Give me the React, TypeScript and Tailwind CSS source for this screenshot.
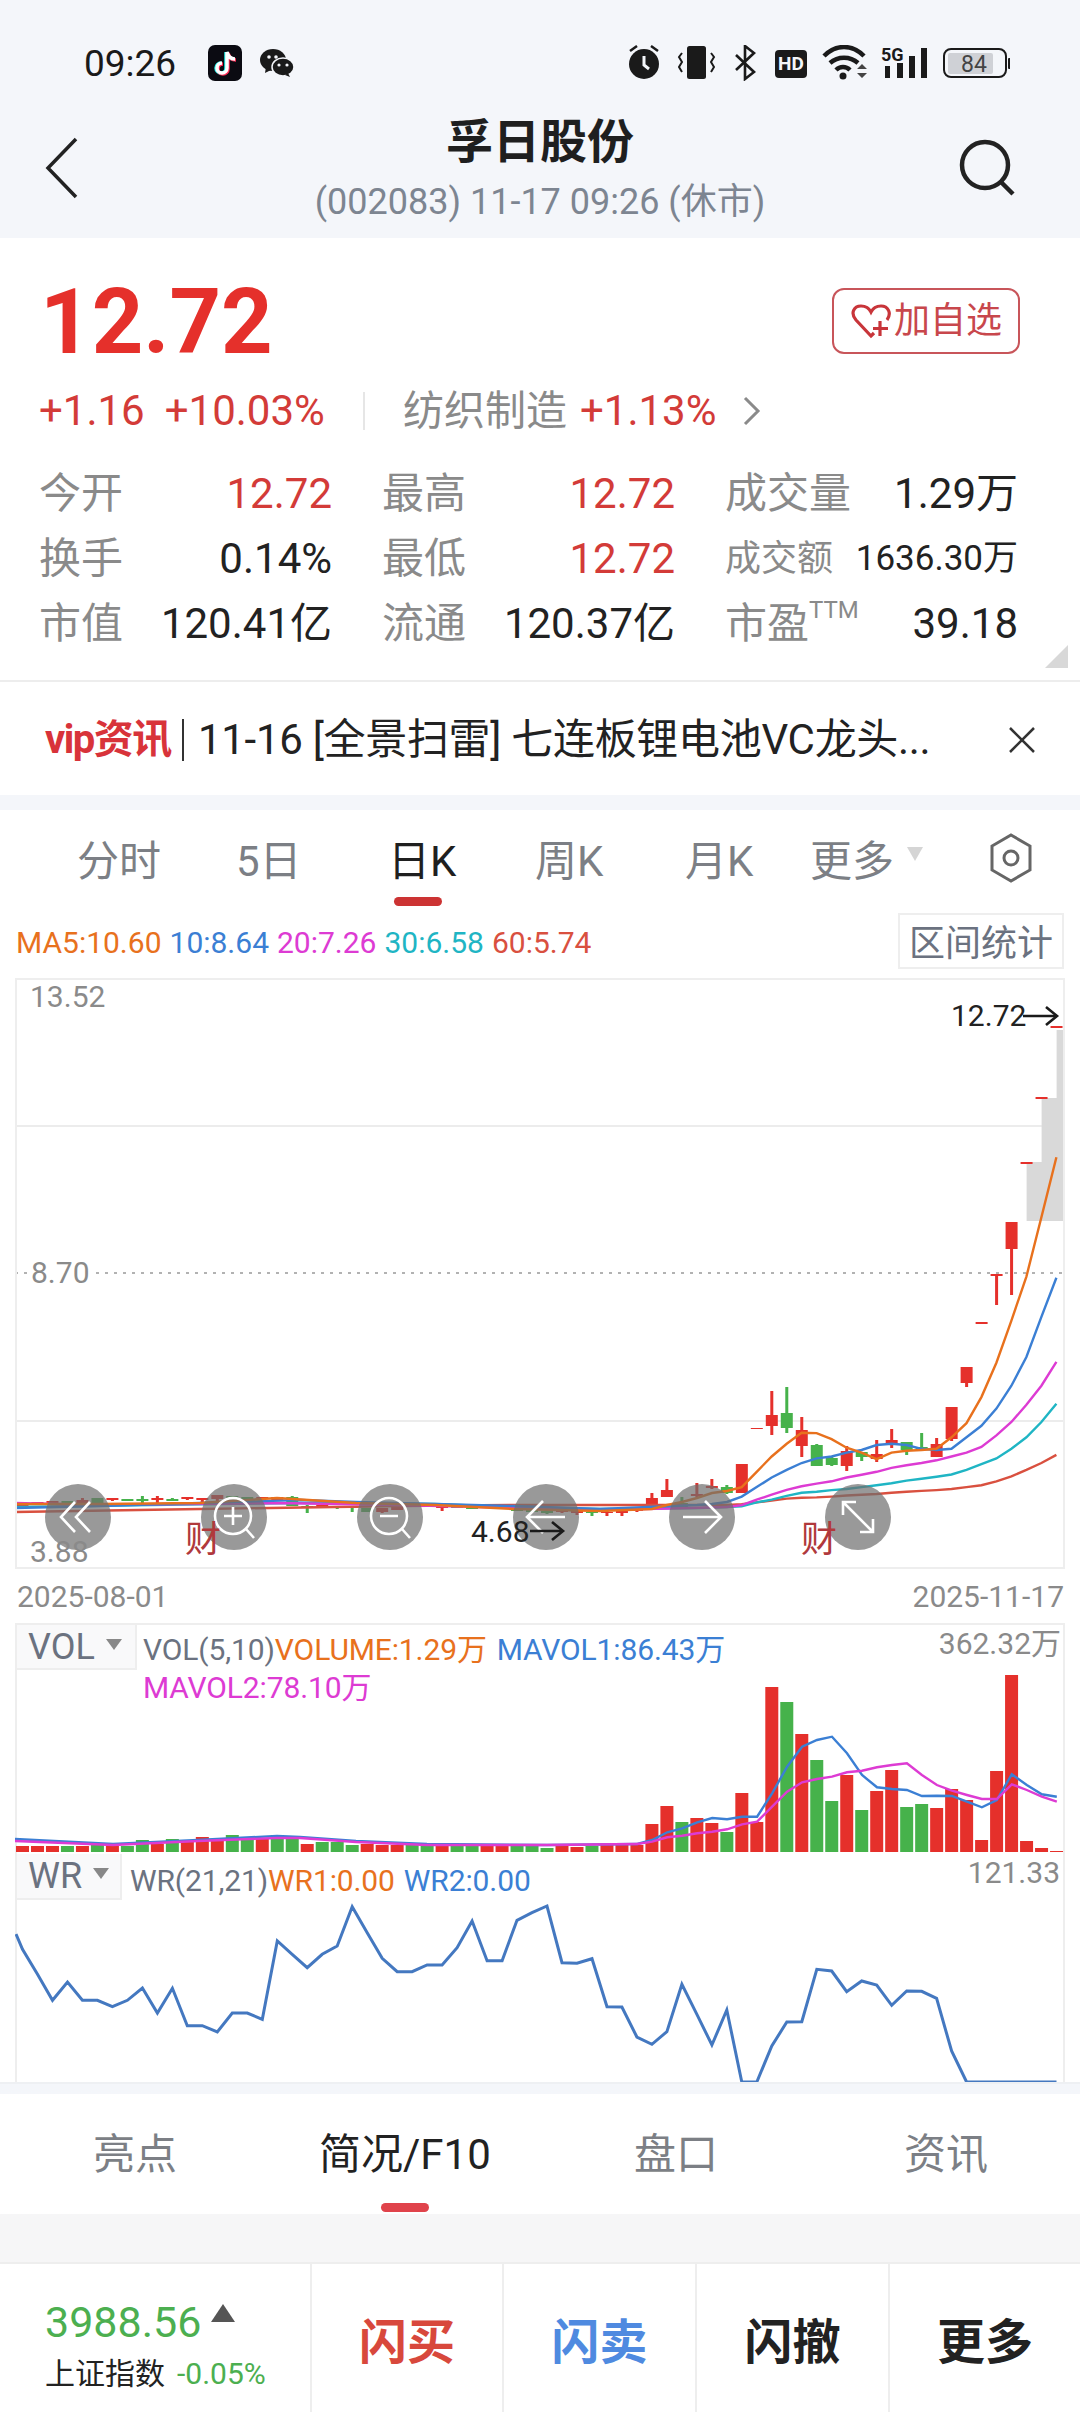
const RED = '#e5302b';
const GREEN = '#46b24b';

// converts coordinates read off the right half of the chart into page coordinates
const k = (h: number, v: number): [number, number] => [540 + h / 2.91, 980 + v / 2.613];
const xi = (i: number) => 22.5 + i * 14.986;
const line = (p: number[][]) => p.map((q) => `${q[0].toFixed(1)},${q[1].toFixed(1)}`).join(' ');

const rightLine = (vs: number[]) => vs.map((v, idx) => k(587 + idx * 43.6, v));

const ma5: number[][] = [[15, 1504], [100, 1504], [200, 1503], [277, 1498], [356, 1503], [435, 1505], [514, 1509], [600, 1511], [652, 1509], [667, 1505], [682, 1502], [697, 1498], [712, 1493], [727, 1491],
  ...rightLine([1325, 1285, 1245, 1212, 1183, 1184, 1200, 1222, 1235, 1252, 1235, 1230, 1228, 1225, 1195, 1158, 1090, 1000, 890, 775, 620, 463])];
const ma10: number[][] = [[15, 1508], [100, 1506], [200, 1503], [300, 1500], [356, 1502], [435, 1504], [514, 1506], [600, 1509], [697, 1505], [712, 1504], [727, 1502],
  ...rightLine([1350, 1325, 1300, 1280, 1262, 1250, 1245, 1235, 1228, 1215, 1212, 1215, 1225, 1228, 1225, 1195, 1165, 1120, 1060, 985, 880, 778])];
const ma20: number[][] = [[15, 1503], [100, 1505], [277, 1503], [400, 1505], [514, 1508], [600, 1510], [690, 1508], [727, 1507],
  ...rightLine([1372, 1358, 1345, 1332, 1323, 1316, 1310, 1300, 1293, 1285, 1275, 1268, 1262, 1255, 1245, 1235, 1220, 1190, 1155, 1110, 1060, 998])];
const ma30: number[][] = [[15, 1507], [150, 1505], [300, 1503], [435, 1504], [514, 1507], [600, 1509], [700, 1508], [727, 1507],
  ...rightLine([1375, 1365, 1358, 1348, 1340, 1337, 1333, 1330, 1325, 1320, 1315, 1308, 1303, 1298, 1292, 1280, 1265, 1250, 1225, 1195, 1155, 1107])];
const ma60: number[][] = [[15, 1512], [200, 1509], [400, 1506], [514, 1505], [640, 1505], [727, 1505],
  ...rightLine([1370, 1365, 1360, 1355, 1353, 1352, 1350, 1347, 1345, 1343, 1340, 1337, 1335, 1333, 1330, 1325, 1320, 1310, 1297, 1280, 1262, 1241])];

// top, bottom, high, low, colour
type Candle = [number, number, number, number, string];
const R = RED;
const G = GREEN;
const candles: Candle[] = [
  [1504, 1508, 1504, 1508, R], [1502, 1504, 1502, 1504, R], [1501, 1503, 1501, 1505, R], [1501, 1504, 1501, 1504, G], [1500, 1503, 1498, 1505, R],
  [1498, 1503, 1498, 1503, G], [1498, 1500, 1498, 1501, R], [1499, 1501, 1499, 1501, G], [1499, 1501, 1496, 1503, G], [1498, 1500, 1496, 1503, R],
  [1499, 1501, 1498, 1501, G], [1497, 1499, 1497, 1500, R], [1498, 1500, 1498, 1505, R], [1495, 1499, 1495, 1503, R], [1496, 1499, 1496, 1499, G],
  [1497, 1500, 1497, 1501, G], [1497, 1499, 1497, 1499, R], [1497, 1500, 1497, 1500, R], [1497, 1506, 1496, 1506, G], [1506, 1507, 1505, 1513, G],
  [1505, 1506, 1505, 1506, R], [1506, 1507, 1506, 1509, G], [1506, 1508, 1506, 1512, G], [1508, 1512, 1508, 1512, G], [1508, 1512, 1508, 1513, R],
  [1506, 1510, 1506, 1510, R], [1505, 1507, 1505, 1507, G], [1505, 1506, 1505, 1506, G], [1505, 1508, 1505, 1511, R], [1506, 1508, 1506, 1508, G],
  [1505, 1509, 1505, 1509, G], [1505, 1507, 1505, 1507, R], [1506, 1507, 1506, 1507, R], [1508, 1511, 1508, 1511, G], [1509, 1512, 1509, 1512, G],
  [1511, 1513, 1511, 1514, G], [1509, 1512, 1509, 1513, R], [1511, 1513, 1511, 1515, R], [1512, 1513, 1512, 1516, G], [1512, 1513, 1511, 1516, R],
  [1511, 1513, 1510, 1516, R], [1509, 1511, 1507, 1512, R], [1498, 1507, 1493, 1507, R], [1490, 1497, 1479, 1497, R], [1503, 1507, 1497, 1507, G],
  [1494, 1496, 1483, 1497, R], [1486, 1488, 1479, 1489, R], [1487, 1493, 1485, 1494, G], [1464, 1493, 1464, 1493, R], [1428, 1429, 1428, 1429, R],
  [1415, 1426, 1391, 1435, R], [1413, 1428, 1387, 1433, G], [1430, 1446, 1417, 1457, R], [1445, 1466, 1444, 1466, G], [1458, 1465, 1456, 1466, G],
  [1451, 1466, 1446, 1471, R], [1452, 1457, 1452, 1461, G], [1454, 1459, 1440, 1462, R], [1440, 1445, 1429, 1448, R], [1442, 1450, 1442, 1455, G],
  [1447, 1449, 1433, 1449, G], [1444, 1457, 1438, 1457, R], [1407, 1439, 1407, 1441, R], [1367, 1383, 1367, 1387, R], [1322, 1324, 1322, 1324, R],
  [1274, 1276, 1274, 1305, R], [1222, 1249, 1222, 1295, R], [1162, 1164, 1162, 1164, R], [1097, 1099, 1097, 1099, R], [1026, 1028, 1026, 1028, R],
];

// height above the baseline, colour
const volumes: [number, string][] = [
  [6, R], [6, R], [6, R], [6, G], [6, R], [7, G], [6, R], [6, G], [12, G], [8, R], [13, G], [11, R], [15, R], [11, R], [17, G], [12, G], [13, R], [17, G], [13, G], [8, R],
  [10, G], [10, G], [7, G], [8, R], [7, R], [7, R], [7, G], [6, G], [6, R], [6, G], [6, G], [6, R], [6, R], [6, G], [6, G], [4, G], [8, R], [5, R], [6, G], [7, R],
  [7, R], [7, R], [28, R], [46, R], [30, G], [34, R], [29, R], [20, G], [59, R], [30, R], [165, R], [150, G], [118, R], [92, G], [51, G], [77, R], [42, G], [61, R], [82, R], [45, G],
  [48, G], [44, R], [63, R], [52, R], [12, R], [81, R], [177, R], [11, R], [4, R], [1, R],
];

const vy = (v: number) => 1580 + v / 3;
const volRight = (vs: number[]) => vs.map((v, idx) => [540 + (283 + idx * 43.6) / 2.91, vy(v)]);
const mavol1: number[][] = [[15, 1839], [113, 1844], [198, 1840], [277, 1836], [300, 1837], [356, 1841], [427, 1844], [547, 1845], [637, 1844],
  ...volRight([792, 780, 757, 745, 727, 714, 718, 710, 710, 640, 560, 500, 480, 470, 520, 585, 622, 627, 630, 648, 647, 648, 665, 682, 660, 583, 615, 643, 650])];
const mavol2: number[][] = [[15, 1841], [113, 1845], [198, 1841], [277, 1838], [300, 1838], [356, 1842], [427, 1845], [547, 1845], [637, 1844],
  ...volRight([792, 785, 772, 767, 760, 755, 748, 733, 725, 680, 635, 607, 597, 590, 577, 572, 562, 555, 550, 585, 615, 632, 645, 657, 657, 613, 630, 650, 665])];

const wrLeft = [265, 340, 418, 363, 418, 418, 437, 418, 381, 456, 382, 494, 494, 513, 456, 456, 475, 240, 280, 320, 280, 255, 137, 215, 292, 332, 332, 312, 312, 260, 180, 299, 299, 178, 155, 135];
const wrRight = [1145, 1147, 1133, 1277, 1278, 1368, 1390, 1352, 1210, 1300, 1392, 1287, 1503, 1503, 1395, 1323, 1322, 1165, 1170, 1232, 1200, 1212, 1273, 1230, 1231, 1252, 1410, 1503, 1503, 1503, 1503, 1503, 1503, 1503];
const wrLine: number[][] = [[16, 1933], ...wrLeft.map((v, i) => [xi(i), 1860 + v / 3]), ...wrRight.map((v, i) => [xi(i + 36), 1580 + v / 3])];

const StatusIcons = () => (
  <svg width="382" height="36" viewBox="628 44 382 36" className="ml-auto">
    {/* alarm */}
    <circle cx="644" cy="63" r="15" fill="#1a1a1a" />
    <path d="M630 50l7-5M658 50l-7-5" stroke="#1a1a1a" strokeWidth="2.5" />
    <path d="M644 55v9l5 4" stroke="#f4f6fa" strokeWidth="3" fill="none" />
    {/* vibrate */}
    <rect x="687" y="45" width="19" height="33" rx="2.5" fill="#1a1a1a" />
    <path d="M682 52l-3 4 3 5-3 5 3 5M711 52l3 4-3 5 3 5-3 5" stroke="#1a1a1a" strokeWidth="2" fill="none" />
    {/* bluetooth */}
    <path d="M736 54l18 17-9 7V45l9 7-18 17" stroke="#1a1a1a" strokeWidth="2.6" fill="none" />
    {/* HD */}
    <rect x="775" y="49" width="32" height="28" rx="4" fill="#1a1a1a" />
    <text x="791" y="69" textAnchor="middle" fontSize="19" fontWeight="700" fill="#f4f6fa" fontFamily="Roboto">HD</text>
    {/* wifi */}
    <path d="M824 55c12-12 28-12 40 0M830 62c8-7 20-7 28 0M836 69c4-4 10-4 14 0" stroke="#1a1a1a" strokeWidth="4.5" fill="none" />
    <circle cx="843" cy="75" r="3.5" fill="#1a1a1a" />
    <path d="M857 68l5-5 5 5zM857 72h10l-5 5z" fill="#444" />
    {/* 5G and signal */}
    <text x="881" y="60" fontSize="18" fontWeight="700" fill="#1a1a1a" fontFamily="Roboto">5G</text>
    <rect x="885" y="65" width="5" height="12" fill="#1a1a1a" />
    <rect x="897" y="62" width="6" height="15" fill="#1a1a1a" />
    <rect x="909" y="55" width="6" height="22" fill="#1a1a1a" />
    <rect x="921" y="47" width="6" height="30" fill="#1a1a1a" />
    {/* battery */}
    <rect x="944" y="48" width="62" height="28" rx="7" fill="none" stroke="#1a1a1a" strokeWidth="2" />
    <rect x="948" y="52" width="45" height="21" rx="2" fill="#cfd1d6" />
    <rect x="1008" y="57" width="2.5" height="11" rx="1" fill="#1a1a1a" />
    <text x="974" y="71" textAnchor="middle" fontSize="23" fill="#444" fontFamily="Roboto">84</text>
  </svg>
);

const Stat = ({ label, value, red, small, ttm }: { label: string; value: string; red?: boolean; small?: boolean; ttm?: boolean }) => (
  <div className="flex items-center justify-between h-[65px]">
    <span className={`text-[#8a8a8a] leading-none ${small ? 'text-[36px]' : 'text-[42px]'}`}>
      {label}
      {ttm && <sup className="text-[24px] align-[8px] leading-none">TTM</sup>}
    </span>
    <span className={`leading-none ${small ? 'text-[35px]' : 'text-[42px]'} ${red ? 'text-[#d33b38]' : 'text-[#222]'}`}>{value}</span>
  </div>
);

const RoundButton = ({ children }: { children: React.ReactNode }) => (
  <div className="w-[66px] h-[66px] rounded-full bg-[#6e6e6e]/70 flex items-center justify-center">
    <svg width="66" height="66" viewBox="0 0 66 66" fill="none" stroke="#fff" strokeWidth="2.6">
      {children}
    </svg>
  </div>
);

const Arrow = ({ x, y, w }: { x: number; y: number; w: number }) => (
  <g stroke="#1a1a1a" strokeWidth="2.6" fill="none">
    <path d={`M${x} ${y}h${w}`} />
    <path d={`M${x + w - 11} ${y - 9}l11 9-11 9`} />
  </g>
);

export default function App() {
  return (
    <div className="w-[1080px] h-[2412px] bg-white overflow-hidden font-[Roboto,'Noto_Sans_CJK_SC',sans-serif]">
      {/* status bar + title */}
      <div className="h-[238px] bg-[#f4f6fa] relative">
        <div className="h-[126px] flex items-center pl-[84px] pr-[70px]">
          <span className="text-[37px] leading-none text-[#1a1a1a] w-[124px]">09:26</span>
          <svg width="34" height="36" viewBox="0 0 34 36">
            <rect width="34" height="36" rx="7" fill="#0b0b12" />
            <path d="M19 7v16a5 5 0 1 1-5-5M19 7c1 4 4 7 8 7" fill="none" stroke="#25f4ee" strokeWidth="3.5" transform="translate(-1 0)" />
            <path d="M19 7v16a5 5 0 1 1-5-5M19 7c1 4 4 7 8 7" fill="none" stroke="#fe2c55" strokeWidth="3.5" transform="translate(1 1)" />
            <path d="M19 7v16a5 5 0 1 1-5-5M19 7c1 4 4 7 8 7" fill="none" stroke="#fff" strokeWidth="3.5" />
          </svg>
          <svg width="34" height="28" viewBox="0 0 34 28" className="ml-[18px]">
            <ellipse cx="13" cy="11" rx="13" ry="11" fill="#1a1a1a" />
            <path d="M6 18l-1 6 6-3z" fill="#1a1a1a" />
            <ellipse cx="23" cy="18" rx="11" ry="9" fill="#1a1a1a" stroke="#f4f6fa" strokeWidth="1.5" />
            <path d="M28 24l2 4-5-2z" fill="#1a1a1a" />
            <circle cx="9" cy="8" r="1.8" fill="#f4f6fa" />
            <circle cx="16" cy="8" r="1.8" fill="#f4f6fa" />
            <circle cx="19" cy="16" r="1.6" fill="#f4f6fa" />
            <circle cx="27" cy="16" r="1.6" fill="#f4f6fa" />
          </svg>
          <StatusIcons />
        </div>
        <div className="flex flex-col items-center">
          <div className="text-[47px] leading-[46px] font-bold text-[#1f1f1f] -mt-[7px]">孚日股份</div>
          <div className="text-[36px] leading-[40px] text-[#7d8591] mt-[17px]">(002083) 11-17 09:26 (休市)</div>
        </div>
        <svg width="40" height="64" viewBox="0 0 40 64" fill="none" stroke="#222" strokeWidth="3.5" className="absolute left-[42px] top-[136px]">
          <path d="M34 3L6 32l28 29" />
        </svg>
        <svg width="60" height="60" viewBox="0 0 60 60" fill="none" stroke="#222" strokeWidth="4.5" className="absolute left-[958px] top-[138px]">
          <circle cx="27" cy="27" r="23" />
          <path d="M43 44l12 12" />
        </svg>
      </div>

      {/* quote */}
      <div className="h-[444px] relative border-b-2 border-[#ededed]">
        <div className="h-[142px] flex items-start justify-between pl-[40px] pr-[60px]">
          <span className="text-[90px] leading-[90px] font-bold mt-[40px] text-[#e5302b]">12.72</span>
          <div className="mt-[50px] w-[188px] h-[66px] rounded-[12px] border-2 border-[#c8555a] flex items-center justify-center gap-[2px] text-[#c8474c] text-[36px] leading-none">
            <svg width="42" height="36" viewBox="0 0 42 36" fill="none" stroke="#c8353a" strokeWidth="3.2">
              <path d="M24 30l-3 3L6 17C0 10 4 3 11 3c4 0 8 2 10 6 2-4 6-6 10-6 7 0 11 7 6 14" />
              <path d="M30 18v15M23 25.500h15" />
            </svg>
            加自选
          </div>
        </div>
        <div className="h-[60px] flex items-center text-[42px] leading-none pl-[39px] pt-[2px]">
          <span className="text-[#d33b38] w-[324px] whitespace-nowrap">
            +1.16<span className="ml-[20px]">+10.03%</span>
          </span>
          <span className="w-[2px] h-[38px] bg-[#e6e6e6]" />
          <span className="text-[#8a8a8a] ml-[38px] text-[41px]">纺织制造</span>
          <span className="text-[#d33b38] ml-[13px]">+1.13%</span>
          <svg width="20" height="32" viewBox="0 0 20 32" fill="none" stroke="#8a8a8a" strokeWidth="3" className="ml-[26px]">
            <path d="M3 3l13 13L3 29" />
          </svg>
        </div>
        <div className="grid grid-cols-[293px_293px_293px] gap-x-[50px] pl-[39px] mt-[21px]">
          <Stat label="今开" value="12.72" red />
          <Stat label="最高" value="12.72" red />
          <Stat label="成交量" value="1.29万" />
          <Stat label="换手" value="0.14%" />
          <Stat label="最低" value="12.72" red />
          <Stat label="成交额" value="1636.30万" small />
          <Stat label="市值" value="120.41亿" />
          <Stat label="流通" value="120.37亿" />
          <Stat label="市盈" value="39.18" ttm />
        </div>
        <div className="absolute left-[1045px] top-[407px] w-0 h-0 border-l-[23px] border-l-transparent border-b-[23px] border-b-[#d8d8d8]" />
      </div>

      {/* news */}
      <div className="h-[113px] flex items-center pl-[45px] pr-[43px] pt-[2px]">
        <span className="text-[40px] leading-none font-bold text-[#d8333a] tracking-[-1.5px] w-[137px] whitespace-nowrap">vip资讯</span>
        <span className="w-[2px] h-[42px] bg-[#333]" />
        <span className="text-[42px] leading-none text-[#222] ml-[14px] whitespace-nowrap flex-1 tracking-[-0.3px]">11-16 [全景扫雷] 七连板锂电池VC龙头...</span>
        <svg width="30" height="30" viewBox="0 0 30 30" stroke="#333" strokeWidth="2.5">
          <path d="M3 3l24 24M27 3L3 27" />
        </svg>
      </div>
      <div className="h-[15px] bg-[#f4f6fa]" />

      {/* period tabs */}
      <div className="h-[102px] relative flex items-center text-[42px] leading-none text-[#7c7f85] pt-[2px]">
        <span className="ml-[77px] w-[159px]">分时</span>
        <span className="w-[152px]">5日</span>
        <span className="w-[147px] text-[#1f1f1f]">日K</span>
        <span className="w-[150px]">周K</span>
        <span className="w-[125px]">月K</span>
        <span>更多</span>
        <span className="ml-[13px] -mt-[16px] w-0 h-0 border-x-[8px] border-x-transparent border-t-[14px] border-t-[#d5d5d5]" />
        <svg width="44" height="50" viewBox="0 0 44 50" fill="none" stroke="#666" strokeWidth="3" className="ml-[66px] -mt-[8px]">
          <path d="M22 2l19 11v24L22 48 3 37V13z" />
          <circle cx="22" cy="25" r="7" />
        </svg>
        <div className="absolute left-[394px] top-[87px] w-[48px] h-[9px] rounded-full bg-[#cc3333]" />
      </div>

      {/* MA legend */}
      <div className="h-[66px] flex items-start pl-[16px] pr-[16px]">
        <div className="flex gap-[8px] text-[30px] leading-none mt-[16px]">
          <span className="text-[#e8711d]">MA5:10.60</span>
          <span className="text-[#3b7fd4]">10:8.64</span>
          <span className="text-[#dd3bd3]">20:7.26</span>
          <span className="text-[#1fb5c4]">30:6.58</span>
          <span className="text-[#d9503f]">60:5.74</span>
        </div>
        <div className="ml-auto mt-[1px] w-[166px] h-[56px] border-2 border-[#eeeeee] flex items-center justify-center pt-[6px] text-[36px] leading-none text-[#6b7280]">区间统计</div>
      </div>

      {/* k-line chart */}
      <div className="relative ml-[15px] w-[1050px] h-[591px]">
        <svg width="1050" height="591" viewBox="15 978 1050 591" className="absolute inset-0">
          <path d="M15 1126h1049M15 1421h1049" stroke="#ececec" strokeWidth="2" />
          <path d="M15 1273h1048" stroke="#999" strokeWidth="1.5" strokeDasharray="3 6" />
          <path d="M1026.600 1221v-59h15v-64h15v-68h7v191z" fill="#d9d9d9" />
          {candles.map((c, i) => (
            <g key={i} fill={c[4]}>
              <rect x={xi(i) - 1.5} y={c[2]} width="3" height={c[3] - c[2]} />
              <rect x={xi(i) - 6} y={c[0]} width="12" height={c[1] - c[0]} />
            </g>
          ))}
          <polyline points={line(ma60)} fill="none" stroke="#d9503f" strokeWidth="2.4" />
          <polyline points={line(ma30)} fill="none" stroke="#1fb5c4" strokeWidth="2.4" />
          <polyline points={line(ma20)} fill="none" stroke="#dd3bd3" strokeWidth="2.4" />
          <polyline points={line(ma10)} fill="none" stroke="#3b7fd4" strokeWidth="2.4" />
          <polyline points={line(ma5)} fill="none" stroke="#e8711d" strokeWidth="2.4" />
        </svg>
        <div className="absolute inset-0 border-2 border-[#eeeeee]" />
        <span className="absolute left-[15px] top-[5px] text-[30px] leading-[28px] text-[#8a8a8a]">13.52</span>
        <span className="absolute left-[15px] top-[281px] px-[1px] text-[30px] leading-[28px] text-[#8a8a8a] bg-white">8.70</span>
        <div className="absolute left-[30px] top-[506px] flex gap-[90px]">
          <RoundButton>
            <path d="M30 18L16 33l14 15M45 18L31 33l14 15" />
          </RoundButton>
          <RoundButton>
            <circle cx="32" cy="32" r="18" />
            <path d="M23 32h18M32 23v18M45 45l8 9" />
          </RoundButton>
          <RoundButton>
            <circle cx="32" cy="32" r="18" />
            <path d="M23 32h18M45 45l8 9" />
          </RoundButton>
          <RoundButton>
            <path d="M52 33H14M30 17L14 33l16 16" />
          </RoundButton>
          <RoundButton>
            <path d="M14 33h38M36 17l16 16-16 16" />
          </RoundButton>
          <RoundButton>
            <path d="M18 18l30 30M18 31V18h13M48 35v13H35" />
          </RoundButton>
        </div>
        <span className="absolute left-[15px] top-[560px] text-[30px] leading-[28px] text-[#8a8a8a]">3.88</span>
        <span className="absolute left-[170px] top-[544px] text-[36px] leading-[36px] text-[#b0393c]">财</span>
        <span className="absolute left-[786px] top-[544px] text-[36px] leading-[36px] text-[#b0393c]">财</span>
        <span className="absolute left-[456px] top-[540px] text-[30px] leading-[28px] text-[#222]">4.68</span>
        <span className="absolute left-[936px] top-[24px] text-[30px] leading-[28px] text-[#222]">12.72</span>
        <svg width="1050" height="591" viewBox="15 978 1050 591" className="absolute inset-0">
          <Arrow x={530} y={1531} w={33} />
          <Arrow x={1023} y={1016} w={34} />
        </svg>
      </div>

      {/* dates */}
      <div className="h-[54px] flex items-center justify-between pl-[17px] pr-[16px] pt-[2px] text-[30px] leading-none text-[#8a8a8a]">
        <span>2025-08-01</span>
        <span>2025-11-17</span>
      </div>

      {/* volume panel */}
      <div className="relative ml-[15px] w-[1050px] h-[231px] border-x-2 border-t-2 border-[#eeeeee]">
        <svg width="1050" height="231" viewBox="15 1623 1050 231" className="absolute -left-[2px] -top-[2px]">
          {volumes.map((b, i) => (
            <rect key={i} x={xi(i) - 6.5} y={1852 - b[0]} width="13" height={b[0]} fill={b[1]} />
          ))}
          <polyline points={line(mavol1)} fill="none" stroke="#3b7fd4" strokeWidth="2.4" />
          <polyline points={line(mavol2)} fill="none" stroke="#dd3bd3" strokeWidth="2.4" />
        </svg>
        <div className="relative flex items-start">
          <div className="w-[120px] h-[45px] bg-[#f9f9fa] border-r-2 border-b-2 border-[#eeeeee] flex items-center pl-[11px] text-[36px] leading-none text-[#6b7280]">
            VOL
            <span className="ml-[11px] -mt-[5px] w-0 h-0 border-x-[8px] border-x-transparent border-t-[11px] border-t-[#888]" />
          </div>
          <div className="ml-[6px] text-[30px] leading-[38px] mt-[6px] tracking-[-0.12px]">
            <div className="whitespace-nowrap">
              <span className="text-[#6b7280]">VOL(5,10)</span>
              <span className="text-[#e8711d]">VOLUME:1.29万</span>
              <span className="text-[#3b7fd4] ml-[10px]">MAVOL1:86.43万</span>
            </div>
            <div className="text-[#dd3bd3]">MAVOL2:78.10万</div>
          </div>
          <span className="absolute right-[2px] top-[3px] text-[30px] leading-[32px] text-[#8a8a8a]">362.32万</span>
        </div>
      </div>

      {/* WR panel */}
      <div className="relative ml-[15px] w-[1050px] h-[228px] border-x-2 border-[#eeeeee]">
        <svg width="1050" height="228" viewBox="15 1853 1050 228" className="absolute -left-[2px] top-0">
          <polyline points={line(wrLine)} fill="none" stroke="#4478c0" strokeWidth="3" />
        </svg>
        <div className="relative flex items-start">
          <div className="w-[105px] h-[46px] bg-[#f9f9fa] border-r-2 border-b-2 border-[#eeeeee] flex items-center pl-[11px] text-[36px] leading-none text-[#6b7280]">
            WR
            <span className="ml-[11px] -mt-[5px] w-0 h-0 border-x-[8px] border-x-transparent border-t-[11px] border-t-[#888]" />
          </div>
          <div className="ml-[8px] mt-[8px] text-[30px] leading-[38px] whitespace-nowrap tracking-[-0.12px]">
            <span className="text-[#6b7280]">WR(21,21)</span>
            <span className="text-[#e8711d]">WR1:0.00</span>
            <span className="text-[#3b7fd4] ml-[9px]">WR2:0.00</span>
          </div>
          <span className="absolute right-[3px] top-[3px] text-[30px] leading-[32px] text-[#8a8a8a]">121.33</span>
        </div>
      </div>
      <div className="h-[12px] bg-[#f4f6fa] border-t-2 border-[#eef0f3]" />

      {/* bottom tabs */}
      <div className="h-[120px] relative flex items-center text-[42px] leading-none text-[#7c7f85] pt-[2px]">
        <span className="ml-[93px] w-[226px]">亮点</span>
        <span className="w-[315px] text-[#222]">简况/F10</span>
        <span className="w-[270px]">盘口</span>
        <span>资讯</span>
        <div className="absolute left-[381px] top-[109px] w-[48px] h-[9px] rounded-full bg-[#e0434b]" />
      </div>
      <div className="h-[48px] bg-[#f6f6f7]" />

      {/* trade bar */}
      <div className="h-[150px] border-t-2 border-[#eeeeee] flex">
        <div className="w-[310px] pl-[45px] pt-[38px]">
          <div className="flex items-start">
            <span className="text-[43px] leading-[40px] text-[#4caf50]">3988.56</span>
            <span className="ml-[10px] mt-[2px] w-0 h-0 border-x-[12px] border-x-transparent border-b-[18px] border-b-[#555]" />
          </div>
          <div className="flex items-center mt-[16px] text-[30px] leading-[32px]">
            <span className="text-[#222]">上证指数</span>
            <span className="text-[#4caf50] ml-[12px]">-0.05%</span>
          </div>
        </div>
        <div className="w-[192px] border-l-2 border-[#eeeeee] flex items-center justify-center pt-[9px] text-[48px] leading-none font-bold text-[#d8483c]">闪买</div>
        <div className="w-[193px] border-l-2 border-[#eeeeee] flex items-center justify-center pt-[9px] text-[48px] leading-none font-bold text-[#4f8ae0]">闪卖</div>
        <div className="w-[193px] border-l-2 border-[#eeeeee] flex items-center justify-center pt-[9px] text-[48px] leading-none font-bold text-[#222]">闪撤</div>
        <div className="flex-1 border-l-2 border-[#eeeeee] flex items-center justify-center pt-[9px] text-[48px] leading-none font-bold text-[#222]">更多</div>
      </div>
    </div>
  );
}
